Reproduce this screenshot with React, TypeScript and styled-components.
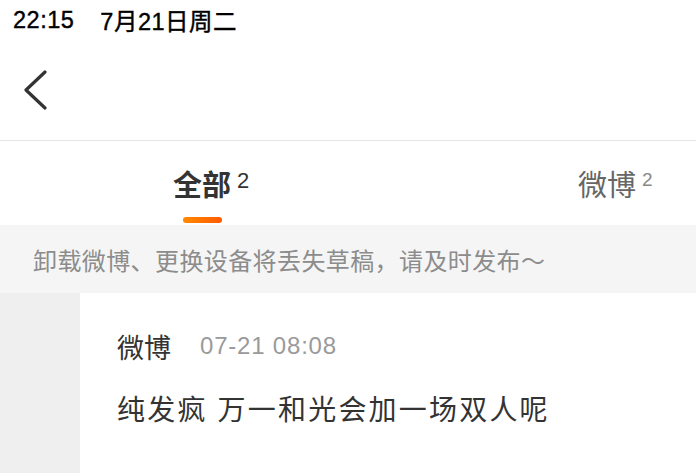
import React from 'react';
import styled, { createGlobalStyle } from 'styled-components';

const GlobalStyle = createGlobalStyle`
  html, body {
    margin: 0;
    padding: 0;
    background: #ffffff;
  }
  body {
    font-family: "Liberation Sans", "Noto Sans CJK SC", sans-serif;
    -webkit-font-smoothing: antialiased;
  }
`;

const Page = styled.div`
  width: 696px;
  height: 473px;
  display: flex;
  flex-direction: column;
  overflow: hidden;
  background: #ffffff;
`;

const StatusBar = styled.div`
  height: 40px;
  display: flex;
  align-items: center;
  gap: 26px;
  padding: 0 13px;
  box-sizing: border-box;
  font-size: 23.5px;
  font-weight: 400;
  letter-spacing: 0.5px;
  color: #000;
  -webkit-text-stroke: 0.4px #000;
`;

const NavBar = styled.div`
  height: 100px;
  display: flex;
  align-items: center;
  padding-left: 24px;
  border-bottom: 1px solid #e6e6e6;
`;

const BackButton = styled.button`
  width: 24px;
  height: 40px;
  padding: 0;
  border: none;
  background: none;
  display: flex;
  align-items: center;
  justify-content: center;
`;

const TabBar = styled.div`
  height: 84px;
  display: flex;
  justify-content: space-between;
  padding: 0 24px 0 137px;
`;

const Tab = styled.div`
  width: 130px;
  display: flex;
  flex-direction: column;
  align-items: center;
  padding-top: 22px;
  box-sizing: border-box;
`;

const TabLabelRow = styled.div`
  position: relative;
  display: flex;
  align-items: center;
  height: 40px;
`;

const TabLabel = styled.span<{ $active?: boolean }>`
  font-size: 29px;
  font-weight: ${(p) => (p.$active ? 700 : 400)};
  color: ${(p) => (p.$active ? '#333333' : '#666666')};
`;

const TabCount = styled.span<{ $active?: boolean }>`
  position: absolute;
  left: 100%;
  top: ${(p) => (p.$active ? '5px' : '6px')};
  margin-left: 6px;
  font-size: ${(p) => (p.$active ? '22px' : '19px')};
  color: ${(p) => (p.$active ? '#333333' : '#888888')};
`;

const Indicator = styled.div<{ $visible?: boolean }>`
  margin-top: 14px;
  width: 39px;
  height: 6px;
  border-radius: 3px;
  background: ${(p) => (p.$visible ? 'linear-gradient(90deg, #ff8a00, #ff5a00)' : 'transparent')};
`;

const Notice = styled.div`
  height: 68px;
  display: flex;
  align-items: center;
  padding-left: 33px;
  background: #f5f5f5;
  font-size: 24px;
  letter-spacing: 0.4px;
  color: #8c8c8c;
`;

const Body = styled.div`
  flex: 1;
  display: flex;
`;

const Gutter = styled.div`
  width: 80px;
  background: #efefef;
`;

const Draft = styled.div`
  flex: 1;
  padding: 33px 0 0 37px;
`;

const DraftMeta = styled.div`
  display: flex;
  align-items: center;
  gap: 29px;
  height: 40px;
`;

const Source = styled.span`
  font-size: 27px;
  color: #333333;
`;

const Time = styled.span`
  font-size: 24px;
  color: #9a9a9a;
  letter-spacing: 0.8px;
`;

const DraftText = styled.div`
  margin-top: 25px;
  font-size: 28px;
  line-height: 40px;
  letter-spacing: 2.2px;
  color: #333333;
`;

const ChevronLeft = () => (
  <svg width="24" height="40" viewBox="0 0 24 40" fill="none">
    <polyline
      points="21,2 2,20 21,38"
      stroke="#333333"
      strokeWidth="3.2"
      strokeLinecap="round"
      strokeLinejoin="round"
    />
  </svg>
);

const tabs = [
  { label: '全部', count: 2, active: true },
  { label: '微博', count: 2, active: false },
];

export default function App() {
  return (
    <>
      <GlobalStyle />
      <Page>
        <StatusBar>
          <span>22:15</span>
          <span>7月21日周二</span>
        </StatusBar>
        <NavBar>
          <BackButton aria-label="返回">
            <ChevronLeft />
          </BackButton>
        </NavBar>
        <TabBar>
          {tabs.map((t) => (
            <Tab key={t.label}>
              <TabLabelRow>
                <TabLabel $active={t.active}>{t.label}</TabLabel>
                <TabCount $active={t.active}>{t.count}</TabCount>
              </TabLabelRow>
              <Indicator $visible={t.active} />
            </Tab>
          ))}
        </TabBar>
        <Notice>卸载微博、更换设备将丢失草稿，请及时发布～</Notice>
        <Body>
          <Gutter />
          <Draft>
            <DraftMeta>
              <Source>微博</Source>
              <Time>07-21 08:08</Time>
            </DraftMeta>
            <DraftText>纯发疯 万一和光会加一场双人呢</DraftText>
          </Draft>
        </Body>
      </Page>
    </>
  );
}
